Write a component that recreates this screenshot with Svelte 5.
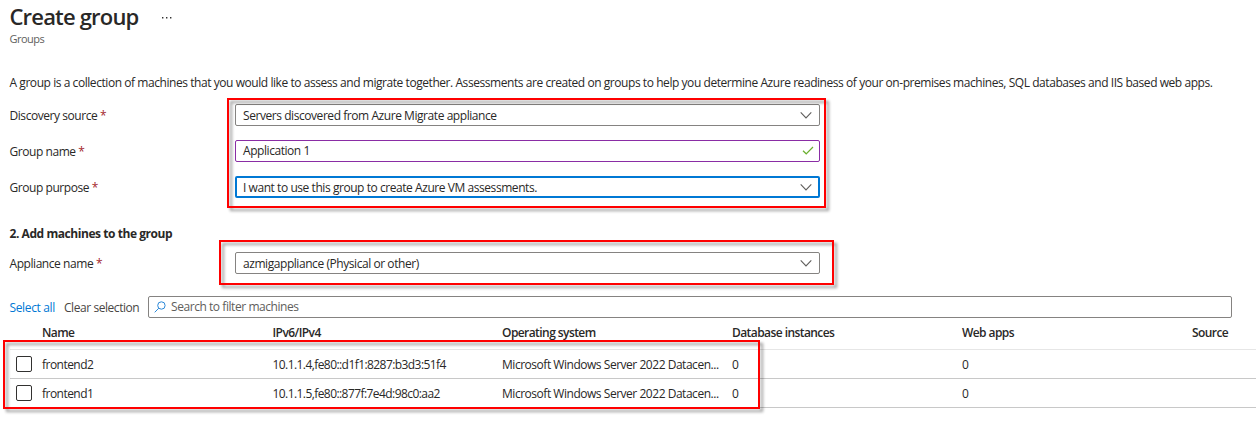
<script>
  const fields = [
    { label: 'Discovery source', value: 'Servers discovered from Azure Migrate appliance', kind: 'select' },
    { label: 'Group name', value: 'Application 1', kind: 'valid' },
    { label: 'Group purpose', value: 'I want to use this group to create Azure VM assessments.', kind: 'focus' }
  ];
  const appliance = { label: 'Appliance name', value: 'azmigappliance (Physical or other)', kind: 'select' };
  const columns = ['Name', 'IPv6/IPv4', 'Operating system', 'Database instances', 'Web apps', 'Source'];
  const os = 'Microsoft Windows Server 2022 Datacen...';
  const rows = [
    ['frontend2', '10.1.1.4,fe80::d1f1:8287:b3d3:51f4', os, '0', '0', ''],
    ['frontend1', '10.1.1.5,fe80::877f:7e4d:98c0:aa2', os, '0', '0', '']
  ];
</script>

{#snippet field(f)}
  <div class="field">
    <div class="label"><span>{f.label}</span> <span class="req">*</span></div>
    <div class="box {f.kind}">
      <span class="value">{f.value}</span>
      {#if f.kind === 'valid'}
        <svg class="check" width="12" height="10" viewBox="0 0 12 10"><path d="M1 4.8 4.2 7.8 11 1" /></svg>
      {:else}
        <svg class="chevron" width="12" height="8" viewBox="0 0 12 8"><path d="M.7 1.4 6 6.9 11.3 1.4" /></svg>
      {/if}
    </div>
  </div>
{/snippet}

<main>
  <header>
    <h1>Create group</h1>
    <svg class="more" width="12" height="3" viewBox="0 0 12 3"><path d="M1 1h1.4v1.4H1zM5 1h1.4v1.4H5zM9 1h1.4v1.4H9z" /></svg>
  </header>
  <div class="sub">Groups</div>
  <p>A group is a collection of machines that you would like to assess and migrate together. Assessments are created on groups to help you determine Azure readiness of your on-premises machines, SQL databases and IIS based web apps.</p>

  <section class="form">
    {#each fields as f}{@render field(f)}{/each}
  </section>
  <h2>2. Add machines to the group</h2>
  {@render field(appliance)}

  <div class="toolbar">
    <span class="all">Select all</span>
    <span class="clear">Clear selection</span>
    <div class="search">
      <svg width="12" height="12" viewBox="0 0 12 12"><circle cx="7.4" cy="4.5" r="3.7" /><path d="M4.8 7.2.7 11.3" /></svg>
      <span>Search to filter machines</span>
    </div>
  </div>

  <div class="table">
    <div class="row head">
      <i></i>
      {#each columns as c}<span>{c}</span>{/each}
    </div>
    {#each rows as r}
      <div class="row">
        <i><span class="cb"></span></i>
        {#each r as c, n}<span class="cell c{n}">{c}</span>{/each}
      </div>
    {/each}
  </div>

  <div class="mark m1"></div>
  <div class="mark m2"></div>
  <div class="mark m3"></div>
</main>

<style>
  :global(body) { background: #fff; overflow: hidden; }
  main {
    position: relative;
    box-sizing: border-box;
    width: 1256px;
    height: 434px;
    overflow: hidden;
    padding: 4px 0 0 9.5px;
    font: 12px/16px "Open Sans", "Noto Sans", sans-serif;
    letter-spacing: -0.44px;
    color: #292827;
    white-space: nowrap;
  }
  header { display: flex; align-items: center; height: 27px; }
  h1 { margin: -2px 0 0; width: 151px; font-size: 22px; line-height: 27px; font-weight: 600; letter-spacing: -0.82px; }
  .more { fill: #333; }
  .sub { height: 17px; font-size: 11px; letter-spacing: -0.5px; color: #605e5c; }
  p { margin: 26px 0 13px; height: 17px; line-height: 17px; }
  .form { display: flex; flex-direction: column; gap: 14px; }
  .field { display: flex; align-items: center; height: 22px; }
  .label { width: 225.5px; padding-top: 2px; }
  .req { color: #a4262c; }
  .box {
    display: flex;
    align-items: center;
    justify-content: space-between;
    box-sizing: border-box;
    width: 585px;
    height: 22px;
    padding: 0 7.5px 0 7px;
    border: 1px solid #858381;
    border-radius: 2px;
  }
  .value { padding-top: 2px; }
  .box.valid { border-color: #8a2da5; padding-right: 5px; }
  .valid .value { padding-top: 0; }
  .box.focus { border: 2px solid #0078d4; padding: 0 6.5px 0 6px; }
  svg { fill: none; flex: none; }
  .chevron { stroke: #605e5c; stroke-width: 1.1; }
  .check { stroke: #6bb02f; stroke-width: 1.2; }
  h2 { margin: 28px 0 10px; height: 16px; font-size: 12px; line-height: 16px; font-weight: 700; }
  .toolbar { display: flex; align-items: center; margin-top: 22px; height: 22px; }
  .all { width: 54.5px; padding-top: 2px; letter-spacing: -0.36px; color: #0078d4; }
  .clear { width: 84px; padding-top: 2px; color: #484644; }
  .search {
    display: flex; align-items: center; gap: 5px; box-sizing: border-box;
    width: 1084px; height: 22px; padding-left: 5px;
    border: 1px solid #858381; border-radius: 2px; color: #605e5c;
  }
  .search svg { stroke: #2b88d8; stroke-width: 1; }
  .row {
    display: grid; align-items: center;
    grid-template-columns: 32.5px 230.5px 229.5px 230px 230px 230px 64px;
    box-sizing: border-box; height: 29px;
    border-bottom: 1px solid #c8c8c8;
  }
  .row.head { height: 32px; border-color: #e6e6e6; padding-bottom: 1px; font-weight: 600; letter-spacing: -0.57px; }
  .cell { padding-top: 2px; }
  .c0 { letter-spacing: -0.53px; }
  .c1 { letter-spacing: -0.57px; }
  .c2 { letter-spacing: -0.47px; }
  i { display: flex; padding-left: 6.5px; }
  .cb { box-sizing: border-box; width: 16px; height: 16px; border: 1px solid #323130; border-radius: 2px; }
  .mark { position: absolute; box-sizing: border-box; border: 2px solid #f00; filter: drop-shadow(3px 3px 1.5px rgba(0, 0, 0, 0.4)); }
  .m1 { left: 227px; top: 98px; width: 599px; height: 110px; }
  .m2 { left: 219px; top: 240px; width: 615px; height: 45px; }
  .m3 { left: 3px; top: 340px; width: 757px; height: 69px; }
</style>
